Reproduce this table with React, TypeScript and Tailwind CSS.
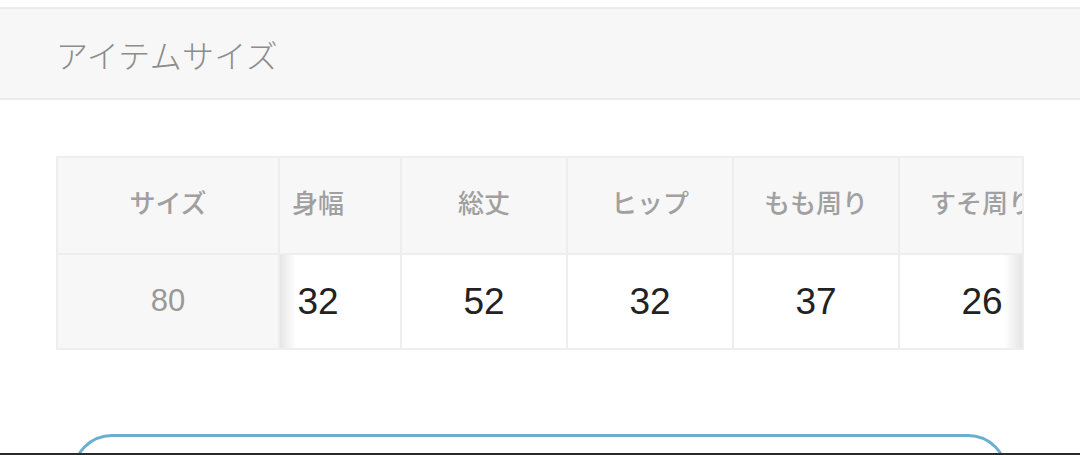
import React from 'react';

const font = { fontFamily: '"Noto Sans CJK JP", "Noto Sans", sans-serif' };

const columns: Array<{ label: string; value: string }> = [
  { label: '身幅', value: '32' },
  { label: '総丈', value: '52' },
  { label: 'ヒップ', value: '32' },
  { label: 'もも周り', value: '37' },
  { label: 'すそ周り', value: '26' },
];

const App: React.FC = () => {
  return (
    <div className="relative w-[1080px] h-[455px] bg-white overflow-hidden" style={font}>
      <div className="mt-[7px] h-[93px] border-y-2 border-[#ebebeb] bg-[#f7f7f7] flex items-center pl-[56px]">
        <span className="text-[32px] text-[#8c8c8c] font-light tracking-[0.3px]">アイテムサイズ</span>
      </div>

      <div className="mt-[56px] ml-[56px] w-[968px] h-[194px] flex bg-[#eeeeee] p-[2px] gap-[2px]">
        <div className="w-[220px] shrink-0 flex flex-col gap-[2px]">
          <div className="h-[95px] pb-[8px] bg-[#f7f7f7] flex items-center justify-center text-[26px] font-medium text-[#a0a0a0]">
            サイズ
          </div>
          <div className="h-[93px] bg-[#f7f7f7] flex items-center justify-center text-[31px] text-[#999999] font-['Liberation_Sans']">
            80
          </div>
        </div>

        <div className="relative flex-1 overflow-hidden">
          <div className="flex gap-[2px] ml-[-44px]">
            {columns.map(col => (
              <div key={col.label} className="w-[164px] shrink-0 flex flex-col gap-[2px]">
                <div className="h-[95px] pb-[8px] bg-[#f7f7f7] flex items-center justify-center text-[26px] font-medium text-[#a0a0a0] whitespace-nowrap">
                  {col.label}
                </div>
                <div className="h-[93px] bg-white flex items-center justify-center text-[37px] text-[#222222] font-['Liberation_Sans']">
                  {col.value}
                </div>
              </div>
            ))}
          </div>
          <div className="absolute left-0 bottom-0 h-[93px] w-[16px] bg-gradient-to-r from-black/10 to-transparent" />
          <div className="absolute right-0 bottom-0 h-[93px] w-[18px] bg-gradient-to-l from-black/10 to-transparent" />
        </div>
      </div>

      <div className="mx-[72px] mt-[84px] h-[80px] rounded-[48px] border-[3px] border-[#6aaed2] bg-white" />

      <div className="absolute left-0 right-0 bottom-0 h-[2px] bg-[#2a2a2a]" />
    </div>
  );
};

export default App;
